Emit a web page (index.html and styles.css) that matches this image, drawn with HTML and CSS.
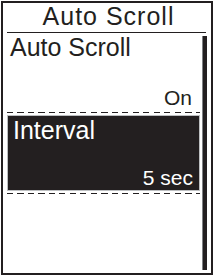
FILE: index.html
```html
<!DOCTYPE html>
<html>
<head>
<meta charset="utf-8">
<link rel="stylesheet" href="styles.css">
</head>
<body>
<div class="frame">
  <div class="title">Auto Scroll</div>
  <div class="body">
    <div class="list">
      <div class="item">
        <div class="label">Auto Scroll</div>
        <div class="value">On</div>
      </div>
      <div class="sep"></div>
      <div class="item selected">
        <div class="label">Interval</div>
        <div class="value">5 sec</div>
      </div>
      <div class="sep"></div>
    </div>
    <div class="scrollbar"></div>
  </div>
</div>
</body>
</html>
```
FILE: styles.css
```css
html, body {
  margin: 0;
  padding: 0;
  background: #fff;
}
body {
  font-family: "Liberation Sans", Arial, sans-serif;
  color: #231f20;
}
.frame {
  margin: 1px 0 0 1px;
  width: 212px;
  height: 274px;
  box-sizing: border-box;
  border: 2px solid #231f20;
  display: flex;
  flex-direction: column;
}
.title {
  height: 30px;
  box-sizing: border-box;
  margin: 0 5px 0 4px;
  border-bottom: 1px solid #231f20;
  text-align: center;
  font-size: 25px;
  line-height: 26px;
  letter-spacing: 1px;
  padding-left: 4px;
}
.body {
  flex: 1;
  display: flex;
  gap: 2px;
  padding: 3px 4px;
}
.list {
  flex: 1;
  display: flex;
  flex-direction: column;
}
.item {
  height: 76px;
  box-sizing: border-box;
  display: flex;
  flex-direction: column;
  justify-content: space-between;
  padding: 0 8px 4px 3px;
}
.label {
  font-size: 25px;
  line-height: 25px;
  margin-top: -1px;
}
.value {
  font-size: 21px;
  line-height: 21px;
  text-align: right;
}
.item.selected {
  margin: 2px 0;
  background: #231f20;
  color: #fff;
  border: 1px solid #bcbec0;
  padding: 2px 6px 2px 5px;
}
.item.selected .label {
  margin-top: 0;
}
.sep {
  height: 1px;
  background: repeating-linear-gradient(90deg, #231f20 0 6px, transparent 6px 10.5px);
}
.scrollbar {
  width: 5px;
  box-sizing: border-box;
  background: #231f20;
  border-left: 1px solid #808285;
}
```
